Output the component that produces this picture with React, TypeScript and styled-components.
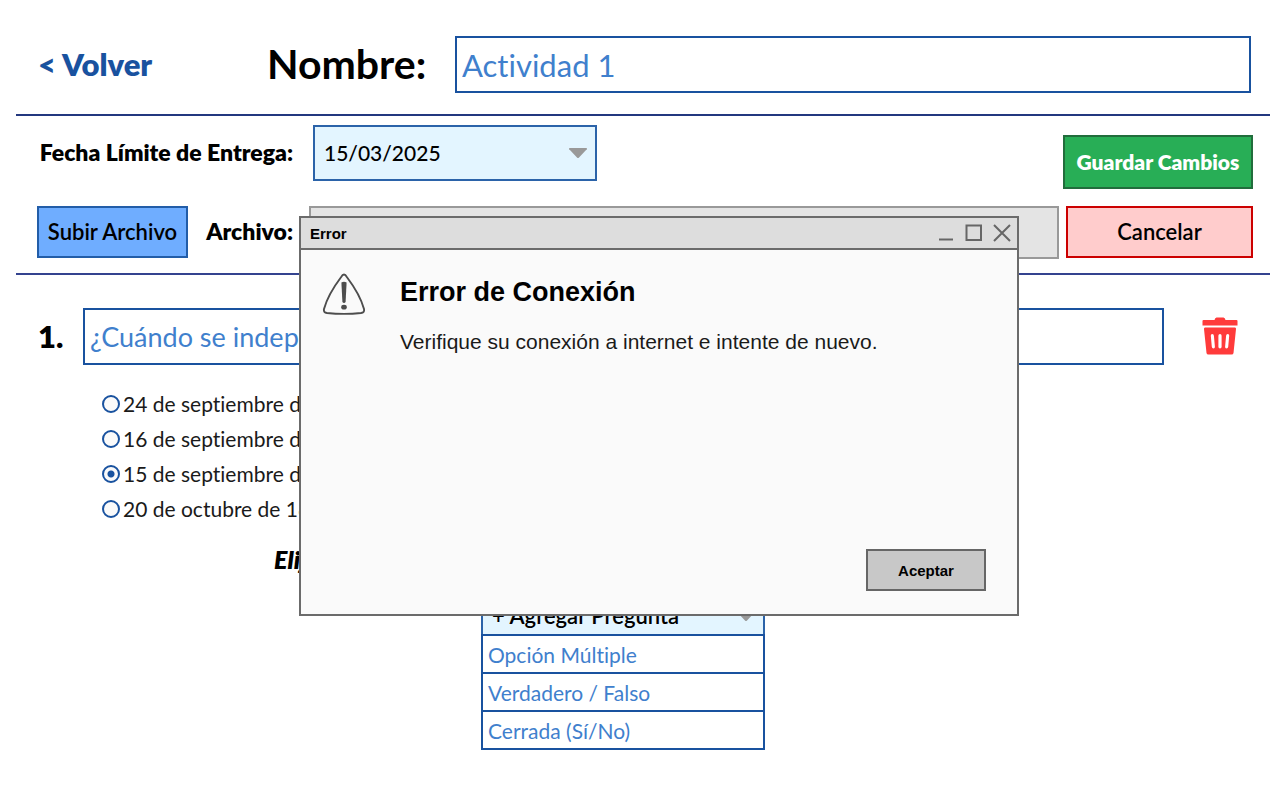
import React, { useState } from 'react';
import styled, { createGlobalStyle } from 'styled-components';

const GlobalStyle = createGlobalStyle`
  *, *::before, *::after { box-sizing: border-box; }
  body {
    margin: 0;
    background: #fff;
    color: #000;
    font-family: Lato, sans-serif;
    font-variant-ligatures: none;
  }
  button, input, select {
    margin: 0;
    border-radius: 0;
    font-family: inherit;
    font-variant-ligatures: none;
  }
`;

const Page = styled.main`
  position: relative;
  min-height: 100vh;
  padding: 0 10px 24px 16px;
`;

const Header = styled.header`
  display: flex;
  align-items: center;
  padding: 36px 19px 21px 22px;
  border-bottom: 2px solid #23387f;
`;

const BackLink = styled.a`
  flex: 0 0 229px;
  padding-bottom: 2px;
  font-size: 31px;
  line-height: 36px;
  font-weight: 800;
  color: #19529f;
  text-decoration: none;
`;

const NameLabel = styled.label`
  flex: 0 0 188px;
  padding-bottom: 2px;
  font-size: 41px;
  line-height: 48px;
  font-weight: 700;
`;

const TextField = styled.input<{ $size: number }>`
  flex: 1;
  min-width: 0;
  height: 57px;
  padding: 0 5px;
  border: 2px solid #19529f;
  background: #fff;
  color: #3f80cd;
  font-size: ${(p) => p.$size}px;
  outline: none;
`;

const Toolbar = styled.section`
  display: flex;
  gap: 4px;
  padding: 9px 17px 14px 21px;
  border-bottom: 2px solid #34438f;
`;

const Fields = styled.div`
  flex: 1;
  display: flex;
  flex-direction: column;
  gap: 25px;
`;

const FieldRow = styled.div<{ $gap: number }>`
  display: flex;
  align-items: flex-start;
  gap: ${(p) => p.$gap}px;
`;

const FieldLabel = styled.label<{ $width: number }>`
  align-self: center;
  width: ${(p) => p.$width}px;
  padding-bottom: 3px;
  font-size: 23px;
  line-height: 28px;
  font-weight: 800;
  text-align: right;
  white-space: nowrap;
`;

const SelectBox = styled.div`
  position: relative;
  width: 284px;
  max-width: 100%;
`;

const Select = styled.select<{ $height: number; $size: number; $weight: number }>`
  appearance: none;
  display: block;
  width: 100%;
  height: ${(p) => p.$height}px;
  padding: 0 9px 2px;
  border: 2px solid #2b63a9;
  background: #e3f5ff;
  color: #000;
  font-size: ${(p) => p.$size}px;
  font-weight: ${(p) => p.$weight};
  outline: none;
`;

const Caret = styled.svg`
  position: absolute;
  right: 9px;
  top: 50%;
  width: 20px;
  height: 12px;
  margin-top: -6px;
  pointer-events: none;
`;

const FileField = styled.input`
  flex: 1;
  min-width: 0;
  height: 53px;
  border: 2px solid #999;
  background: #e4e4e4;
  outline: none;
`;

const Actions = styled.div`
  display: flex;
  flex-direction: column;
  align-items: flex-end;
  gap: 17px;
  padding-top: 10px;
`;

const tones = {
  upload: { bg: '#6fadff', line: '#225da8', ink: '#000', weight: 600 },
  save: { bg: '#28ae56', line: '#216d3c', ink: '#fff', weight: 800 },
  cancel: { bg: '#ffcccc', line: '#cc0000', ink: '#000', weight: 600 },
};

const Button = styled.button<{ $tone: keyof typeof tones; $width: number; $height: number; $size: number }>`
  width: ${(p) => p.$width}px;
  height: ${(p) => p.$height}px;
  padding: 0 0 2px;
  border: 2px solid ${(p) => tones[p.$tone].line};
  background: ${(p) => tones[p.$tone].bg};
  color: ${(p) => tones[p.$tone].ink};
  font-size: ${(p) => p.$size}px;
  font-weight: ${(p) => tones[p.$tone].weight};
  white-space: nowrap;
  cursor: pointer;
`;

const Question = styled.section`
  padding: 33px 32px 0 22px;
`;

const QuestionRow = styled.div`
  display: flex;
  align-items: center;
`;

const QuestionNumber = styled.label`
  flex: 0 0 45px;
  padding-bottom: 2px;
  font-size: 31px;
  line-height: 40px;
  font-weight: 800;
`;

const IconButton = styled.button`
  display: flex;
  margin-left: 38px;
  padding: 0 0 2px;
  border: 0;
  background: none;
  cursor: pointer;
`;

const Options = styled.div`
  display: flex;
  flex-direction: column;
  padding: 21px 0 0 64px;
`;

const Option = styled.label`
  display: flex;
  align-items: center;
  gap: 3px;
  height: 35px;
  font-size: 21px;
  line-height: 28px;
  color: #1a1a1a;
`;

const Radio = styled.input`
  appearance: none;
  width: 18px;
  height: 18px;
  margin: 0;
  border: 2px solid #19529f;
  border-radius: 50%;
  background: #fafafa;

  &:checked {
    background: radial-gradient(circle, #19529f 0 3px, #fafafa 4px);
  }
`;

const Hint = styled.p`
  margin: 17px 0 0 236px;
  font-size: 25px;
  line-height: 32px;
  font-weight: 800;
  font-style: italic;
`;

const AddQuestion = styled.section`
  width: 284px;
  margin: 21px 0 0 465px;
`;

const TypeList = styled.ul`
  position: relative;
  width: 284px;
  margin: -2px 0 0;
  padding: 0;
  list-style: none;
`;

const TypeItem = styled.li`
  & + & { margin-top: -2px; }
`;

const TypeButton = styled.button`
  display: block;
  width: 100%;
  height: 40px;
  padding: 0 5px;
  border: 2px solid #19529f;
  background: #fff;
  color: #3f80cd;
  font-size: 21px;
  text-align: left;
  cursor: pointer;
`;

const Dialog = styled.div`
  position: absolute;
  top: 216px;
  left: calc(50% - 341px);
  display: flex;
  flex-direction: column;
  width: 720px;
  min-height: 400px;
  border: 2px solid #6b6b6b;
  background: #fafafa;
  font-family: "Liberation Sans", Arial, sans-serif;
`;

const TitleBar = styled.div`
  display: flex;
  align-items: center;
  justify-content: space-between;
  height: 32px;
  padding: 0 5px 0 9px;
  border-bottom: 2px solid #6b6b6b;
  background: #dddddd;
  font-size: 15px;
  font-weight: 700;
`;

const WindowControls = styled.div`
  display: flex;
  gap: 8px;
`;

const WindowButton = styled.button`
  display: flex;
  padding: 0;
  border: 0;
  background: none;
  cursor: pointer;
`;

const DialogBody = styled.div`
  flex: 1;
  display: flex;
  gap: 34px;
  padding: 23px 21px 0;
`;

const DialogTitle = styled.h2`
  margin: 3px 0 18px;
  font-size: 27px;
  line-height: 32px;
  font-weight: 700;
`;

const DialogText = styled.p`
  margin: 0;
  font-size: 21px;
  line-height: 32px;
  color: #1a1a1a;
`;

const DialogFooter = styled.div`
  display: flex;
  justify-content: flex-end;
  padding: 0 31px 23px;
`;

const AcceptButton = styled.button`
  width: 120px;
  height: 42px;
  border: 2px solid #666;
  background: #c8c8c8;
  color: #000;
  font-size: 15px;
  font-weight: 700;
  cursor: pointer;
`;

const DropCaret = () => (
  <Caret viewBox="0 0 20 12" aria-hidden="true">
    <path d="M1.6 1h16.8q1 .4.4 1.3L11 10.400q-1 1-2 0L1.200 2.300Q.6 1.400 1.600 1z" fill="#999" />
  </Caret>
);

const TrashIcon = () => (
  <svg width="36" height="39" viewBox="0 0 36 39" aria-hidden="true">
    <path d="M1.500 4H12.500q.5-2.500 2-2.500h7q1.500 0 2 2.500h11q1 0 1 1v4.500H.5V5q0-1 1-1z" fill="#ff3b3b" />
    <path
      fillRule="evenodd"
      d="M3 11.500h30q1.200 0 1 1.500L31.500 37q-.2 1.500-2 1.500h-23q-1.800 0-2-1.500L2 13q-.2-1.500 1-1.500zM10.300 18q-1.700 0-1.500 1.800l1 11q.2 1.600 1.700 1.600t1.400-1.600l-1-11q-.1-1.800-1.600-1.800zM18 18q-1.600 0-1.600 1.800v11q0 1.600 1.600 1.600t1.600-1.600v-11Q19.600 18 18 18zM25.700 18q-1.500 0-1.600 1.800l-1 11q-.1 1.600 1.400 1.600t1.700-1.600l1-11q.2-1.800-1.500-1.800z"
      fill="#ff3b3b"
    />
  </svg>
);

const WarningIcon = () => (
  <svg width="44" height="42" viewBox="0 0 44 42" aria-hidden="true">
    <path
      d="M22 1.500c-1.200 0-2 1-3 2.700C15 9.500 5.500 23 2 36c-.5 2.600.6 3.600 3 4 10 1 24 1 34 0 2.400-.4 3.500-1.400 3-4C38.500 23 29 9.500 25 4.200c-1-1.700-1.800-2.700-3-2.700z"
      fill="none"
      stroke="#4d4d4d"
      strokeWidth="1.900"
    />
    <path d="M19.400 9.500q2.600-1.500 5.200 0l-1 19.500q-1.600 2-3.200 0z" fill="#4d4d4d" />
    <ellipse cx="22" cy="34.200" rx="2.800" ry="2.400" fill="#4d4d4d" />
  </svg>
);

const windowControls = [
  { label: 'Minimizar', d: 'M3 16.500H17' },
  { label: 'Maximizar', d: 'M2.500 2.500H17V17H2.500Z' },
  { label: 'Cerrar', d: 'M2 2L18 18M18 2L2 18' },
];

const answers = [
  '24 de septiembre de 1821',
  '16 de septiembre de 1821',
  '15 de septiembre de 1821',
  '20 de octubre de 1821',
];

const questionTypes = ['Opción Múltiple', 'Verdadero / Falso', 'Cerrada (Sí/No)'];

export default function App() {
  const [selected, setSelected] = useState(2);

  return (
    <>
      <GlobalStyle />
      <Page>
        <Header>
          <BackLink href="#volver">&lt; Volver</BackLink>
          <NameLabel htmlFor="nombre">Nombre:</NameLabel>
          <TextField id="nombre" $size={31} defaultValue="Actividad 1" />
        </Header>

        <Toolbar>
          <Fields>
            <FieldRow $gap={20}>
              <FieldLabel htmlFor="fecha" $width={256}>Fecha Límite de Entrega:</FieldLabel>
              <SelectBox>
                <Select id="fecha" $height={56} $size={21} $weight={500}>
                  <option>15/03/2025</option>
                </Select>
                <DropCaret />
              </SelectBox>
            </FieldRow>
            <FieldRow $gap={16}>
              <Button type="button" $tone="upload" $width={151} $height={52} $size={22}>Subir Archivo</Button>
              <FieldLabel htmlFor="archivo" $width={89}>Archivo:</FieldLabel>
              <FileField id="archivo" readOnly />
            </FieldRow>
          </Fields>
          <Actions>
            <Button type="button" $tone="save" $width={190} $height={54} $size={21}>Guardar Cambios</Button>
            <Button type="button" $tone="cancel" $width={187} $height={52} $size={22}>Cancelar</Button>
          </Actions>
        </Toolbar>

        <Question>
          <QuestionRow>
            <QuestionNumber htmlFor="pregunta">1.</QuestionNumber>
            <TextField id="pregunta" $size={27} defaultValue="¿Cuándo se independizó Centroamérica?" />
            <IconButton type="button" aria-label="Eliminar pregunta"><TrashIcon /></IconButton>
          </QuestionRow>
          <Options role="radiogroup" aria-label="Respuestas">
            {answers.map((answer, i) => (
              <Option key={answer}>
                <Radio type="radio" name="respuesta" checked={selected === i} onChange={() => setSelected(i)} />
                {answer}
              </Option>
            ))}
          </Options>
          <Hint>Elija la respuesta correcta</Hint>
        </Question>

        <AddQuestion>
          <SelectBox>
            <Select aria-label="Agregar pregunta" $height={40} $size={22} $weight={600}>
              <option>+ Agregar Pregunta</option>
            </Select>
            <DropCaret />
          </SelectBox>
          <TypeList>
            {questionTypes.map((type) => (
              <TypeItem key={type}><TypeButton type="button">{type}</TypeButton></TypeItem>
            ))}
          </TypeList>
        </AddQuestion>

        <Dialog role="alertdialog" aria-labelledby="error-title" aria-describedby="error-text">
          <TitleBar>
            <span>Error</span>
            <WindowControls>
              {windowControls.map(({ label, d }) => (
                <WindowButton key={label} type="button" aria-label={label}>
                  <svg width="20" height="20" viewBox="0 0 20 20" aria-hidden="true">
                    <path d={d} fill="none" stroke="#666" strokeWidth="2" />
                  </svg>
                </WindowButton>
              ))}
            </WindowControls>
          </TitleBar>
          <DialogBody>
            <WarningIcon />
            <div>
              <DialogTitle id="error-title">Error de Conexión</DialogTitle>
              <DialogText id="error-text">Verifique su conexión a internet e intente de nuevo.</DialogText>
            </div>
          </DialogBody>
          <DialogFooter>
            <AcceptButton type="button">Aceptar</AcceptButton>
          </DialogFooter>
        </Dialog>
      </Page>
    </>
  );
}
